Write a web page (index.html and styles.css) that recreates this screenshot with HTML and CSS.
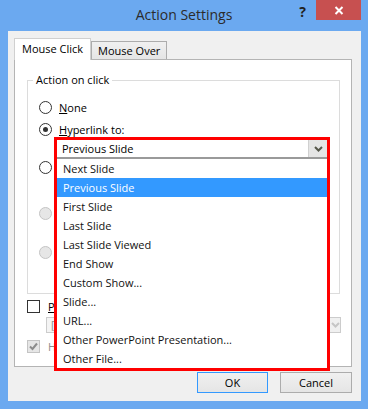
FILE: index.html
```html
<!DOCTYPE html>
<html lang="en">

<head>
    <meta charset="UTF-8">
    <meta name="viewport" content="width=device-width, initial-scale=1.0">
    <title>Action Settings</title>
    <link rel="stylesheet" href="styles.css">
</head>

<body>
    <div id="dialog">
        <div id="titlebar">
            <span id="title">Action Settings</span>
            <div id="controls">
                <span id="helpbtn">?</span>
                <span id="closebtn">
                    <svg width="10" height="9" viewBox="0 0 10 9"><path d="M1.5 1L8.5 8M8.5 1L1.5 8" stroke="#fff" stroke-width="2"/></svg>
                </span>
            </div>
        </div>

        <div id="client">
            <div id="tabs">
                <div class="tab active">Mouse Click</div>
                <div class="tab">Mouse Over</div>
            </div>

            <div id="panel">
                <fieldset class="group">
                    <legend>Action on click</legend>
                    <div class="option first"><span class="radio"></span><span><u>N</u>one</span></div>
                    <div class="option"><span class="radio checked"></span><span><u>H</u>yperlink to:</span></div>

                    <div class="select">
                        <div class="select-field">
                            <span>Previous Slide</span>
                            <span class="select-btn">
                                <svg width="9" height="6" viewBox="0 0 9 6"><path d="M1 1L4.5 4.5L8 1" fill="none" stroke="#55574a" stroke-width="2"/></svg>
                            </span>
                        </div>
                        <ul class="select-list">
                            <li>Next Slide</li>
                            <li class="hot">Previous Slide</li>
                            <li>First Slide</li>
                            <li>Last Slide</li>
                            <li>Last Slide Viewed</li>
                            <li>End Show</li>
                            <li>Custom Show...</li>
                            <li>Slide...</li>
                            <li>URL...</li>
                            <li>Other PowerPoint Presentation...</li>
                            <li>Other File...</li>
                        </ul>
                    </div>

                    <!-- these rows sit under the open list -->
                    <div class="option run"><span class="radio"></span></div>
                    <div class="option macro disabled"><span class="radio"></span></div>
                    <div class="option object disabled"><span class="radio"></span></div>
                </fieldset>

                <div class="check-row sound"><span class="checkbox"></span><span class="cut"><u>P</u>l</span></div>
                <div class="sound-field">
                    <span>[</span>
                    <span class="sound-btn">
                        <svg width="9" height="6" viewBox="0 0 9 6"><path d="M1 1L4.5 4.5L8 1" fill="none" stroke="#c6c6c6" stroke-width="2"/></svg>
                    </span>
                </div>
                <div class="check-row highlight disabled">
                    <span class="checkbox checked">
                        <svg width="11" height="11" viewBox="0 0 11 11"><path d="M2 5.5L4.5 8L9 2.5" fill="none" stroke="#8c8c8c" stroke-width="2"/></svg>
                    </span>
                    <span>H</span>
                </div>
            </div>

            <div id="buttons">
                <button class="btn default">OK</button>
                <button class="btn">Cancel</button>
            </div>
        </div>
    </div>
</body>

</html>
```

FILE: styles.css
```css
body {
    margin: 0;
    background-color: rgb(107, 169, 240);
    font-family: "Open Sans", "Noto Sans", sans-serif;
    font-size: 11px;
    color: #000;
}

#dialog {
    width: 368px;
    height: 409px;
}

#titlebar {
    display: grid;
    grid-template-columns: 1fr auto 1fr;
    height: 31px;
}

#title {
    grid-column: 2;
    font-size: 14px;
    line-height: 30px;
    color: #2b2b2b;
}

#controls {
    grid-column: 3;
    justify-self: end;
    display: flex;
    align-items: flex-start;
    margin-right: 7px;
}

#helpbtn {
    font-size: 14px;
    font-weight: bold;
    line-height: 24px;
    color: #222;
    margin-right: 10px;
}

#closebtn {
    display: flex;
    justify-content: center;
    align-items: center;
    width: 45px;
    height: 20px;
    background-color: rgb(199, 80, 80);
}

#client {
    margin: 0 7px 8px 8px;
    height: 370px;
    background-color: #f0f0f0;
    box-sizing: border-box;
}

#tabs {
    display: flex;
    align-items: flex-end;
    padding: 7px 0 0 6px;
    position: relative;
    z-index: 1;
}

.tab {
    box-sizing: border-box;
    height: 18px;
    padding: 0 6px;
    line-height: 17px;
    border: 1px solid #acacac;
    border-bottom: none;
    background: linear-gradient(#f0f0f0, #e5e5e5);
}

.tab.active {
    height: 22px;
    padding: 0 7px;
    line-height: 20px;
    border-color: #d0d0d0;
    background: #fff;
    margin-bottom: -1px;
}

#panel {
    box-sizing: border-box;
    margin-left: 6px;
    width: 338px;
    height: 308px;
    border: 1px solid #b4b4b4;
    background-color: #fff;
}

.group {
    box-sizing: border-box;
    width: 313px;
    height: 222px;
    margin: 12px 0 0 12px;
    padding: 10px 0 0 11px;
    border: 1px solid #dcdcdc;
}

.group legend {
    margin-left: -6px;
    padding: 0 3px;
    line-height: 16px;
}

.option {
    display: flex;
    align-items: center;
    gap: 7px;
    height: 18px;
    margin-top: 4px;
}

.option.first {
    margin-top: 0;
}

.option.run {
    margin-top: -1px;
}

.option.macro {
    margin-top: 28px;
}

.option.object {
    margin-top: 21px;
}

.disabled {
    color: #8d8d8d;
}

.radio {
    box-sizing: border-box;
    display: flex;
    justify-content: center;
    align-items: center;
    width: 13px;
    height: 13px;
    border: 1px solid #333;
    border-radius: 50%;
    background-color: #fff;
}

.radio.checked::after {
    content: "";
    width: 5px;
    height: 5px;
    border-radius: 50%;
    background-color: #333;
}

.disabled .radio {
    border-color: #c4c4c4;
    background-color: #e6e6e6;
}

/* open hyperlink dropdown, outlined in red */
.select {
    position: relative;
    box-sizing: border-box;
    width: 276px;
    margin: -1px 0 0 15px;
    border: 3px solid #ff0000;
    border-bottom: none;
}

.select-field {
    display: flex;
    justify-content: space-between;
    align-items: stretch;
    height: 19px;
    box-sizing: border-box;
    border-bottom: 2px solid #9a9a9a;
    padding-left: 5px;
    line-height: 17px;
    background-color: #fff;
}

.select-btn,
.sound-btn {
    display: flex;
    justify-content: center;
    align-items: center;
    width: 18px;
    background-color: #e5e5e5;
    border-left: 1px solid #d0d0d0;
}

.select-list {
    position: absolute;
    top: 100%;
    left: -3px;
    right: -3px;
    z-index: 2;
    margin: 0;
    padding: 0;
    list-style: none;
    border: 3px solid #ff0000;
    border-top: none;
    background-color: #fff;
}

.select-list li {
    height: 19px;
    line-height: 19px;
    padding-left: 6px;
    color: #111;
}

.select-list li.hot {
    background-color: #3399ff;
    color: #fff;
}

.check-row {
    display: flex;
    align-items: center;
    gap: 8px;
    height: 15px;
    margin-left: 12px;
}

.check-row.sound {
    margin-top: 5px;
}

.check-row.highlight {
    margin-top: 6px;
}

.checkbox {
    box-sizing: border-box;
    display: flex;
    justify-content: center;
    align-items: center;
    width: 13px;
    height: 13px;
    border: 1px solid #333;
    background-color: #fff;
}

.disabled .checkbox {
    border-color: #c4c4c4;
    background-color: #e6e6e6;
}

.sound-field {
    box-sizing: border-box;
    display: flex;
    justify-content: space-between;
    width: 295px;
    height: 16px;
    margin: 3px 0 0 31px;
    padding-left: 4px;
    line-height: 14px;
    border: 1px solid #cccccc;
    background-color: #f4f4f4;
    color: #8d8d8d;
}

.sound-btn {
    width: 10px;
    background-color: #f0f0f0;
    border-left: 1px solid #dcdcdc;
}

#buttons {
    display: flex;
    justify-content: flex-end;
    gap: 12px;
    margin-top: 5px;
    padding-right: 9px;
}

.btn {
    box-sizing: border-box;
    width: 72px;
    height: 21px;
    padding: 0;
    font-family: inherit;
    font-size: 11px;
    color: #000;
    border: 1px solid #acacac;
    background: linear-gradient(#f0f0f0, #e5e5e5);
}

.btn.default {
    width: 71px;
    border-color: #3399ff;
}
```
